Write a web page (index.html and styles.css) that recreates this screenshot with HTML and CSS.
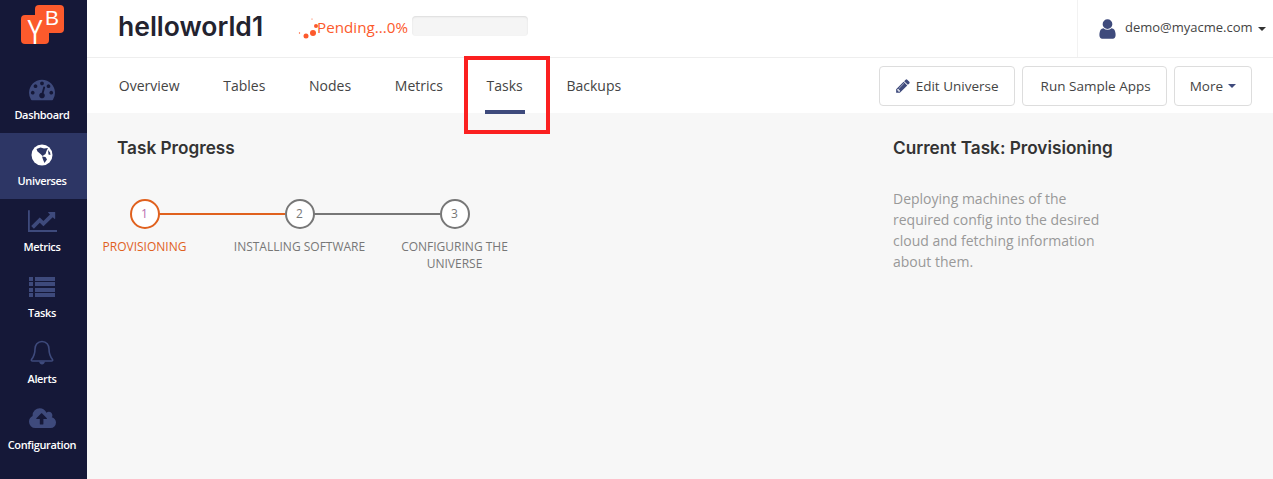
FILE: index.html
```html
<!DOCTYPE html>
<html lang="en">
<head>
    <meta charset="UTF-8">
    <meta name="viewport" content="width=device-width, initial-scale=1.0">
    <title>helloworld1 - Tasks</title>
    <link rel="stylesheet" href="styles.css">
</head>
<body>
    <div class="app">
        <aside class="sidebar">
            <a class="logo" href="#">
                <svg width="45" height="45" viewBox="0 0 45 45">
                    <rect x="16" y="5" width="29" height="28" rx="4" fill="#fc5a2c"/>
                    <rect x="2" y="15" width="28" height="29" rx="4" fill="#fc5a2c"/>
                    <text class="logo-letter" transform="translate(8 44) scale(1 1.45)">Y</text>
                    <text class="logo-letter logo-b" x="26" y="25">B</text>
                </svg>
            </a>
            <a class="side-item" href="#">
                <svg class="side-icon" width="26" height="26" viewBox="0 0 1792 1792"><path d="M384 1152q0-53-37.5-90.5t-90.5-37.5-90.5 37.5-37.5 90.5 37.5 90.5 90.5 37.5 90.5-37.5 37.5-90.5zm192-448q0-53-37.5-90.5t-90.5-37.5-90.5 37.5-37.5 90.5 37.5 90.5 90.5 37.5 90.5-37.5 37.5-90.5zm428 481l101-382q6-26-7.5-48.5t-38.5-29.5-48 6.5-30 39.5l-101 382q-60 5-107 43.5t-63 98.5q-20 77 20 146t117 89 146-20 89-117q16-60-6-117t-72-91zm660-33q0-53-37.5-90.5t-90.5-37.5-90.5 37.5-37.5 90.5 37.5 90.5 90.5 37.5 90.5-37.5 37.5-90.5zm-640-640q0-53-37.5-90.5t-90.5-37.5-90.5 37.5-37.5 90.5 37.5 90.5 90.5 37.5 90.5-37.5 37.5-90.5zm448 192q0-53-37.5-90.5t-90.5-37.5-90.5 37.5-37.5 90.5 37.5 90.5 90.5 37.5 90.5-37.5 37.5-90.5zm320 448q0 261-141 483-19 29-54 29h-1402q-35 0-54-29-141-221-141-483 0-182 71-348t191-286 286-191 348-71 348 71 286 191 191 286 71 348z"/></svg>
                <span>Dashboard</span>
            </a>
            <a class="side-item active" href="#">
                <svg class="side-icon" width="22" height="22" viewBox="0 0 22 22">
                    <circle cx="11" cy="11" r="10.5" fill="#fff"/>
                    <path d="M5.500 5l4-1.500 3.500 1 4-.5-1.500 3-1 3-3 2-2-2-3-2.500z" fill="#2d3665"/>
                    <path d="M11 12.500l3.500.5 1.500 2.500-2.500 3.500-1.500-3.500z" fill="#2d3665"/>
                    <path d="M17 6l2 2.500.5 2.500-2-.5z" fill="#2d3665"/>
                </svg>
                <span>Universes</span>
            </a>
            <a class="side-item" href="#">
                <svg class="side-icon" width="29" height="26" viewBox="0 0 2048 1792"><path d="M2048 1536v128h-2048v-1536h128v1408h1920zm-128-1248v435q0 21-19.5 29.5t-35.5-7.5l-121-121-633 633q-10 10-23 10t-23-10l-233-233-416 416-192-192 585-585q10-10 23-10t23 10l233 233 464-464-121-121q-16-16-7.5-35.5t29.5-19.5h435q14 0 23 9t9 23z"/></svg>
                <span>Metrics</span>
            </a>
            <a class="side-item" href="#">
                <svg class="side-icon" width="26" height="22" viewBox="0 0 26 22">
                    <rect y="1" width="4" height="4"/><rect x="6" y="1" width="20" height="4"/>
                    <rect y="6" width="4" height="4"/><rect x="6" y="6" width="20" height="4"/>
                    <rect y="12" width="4" height="4"/><rect x="6" y="12" width="20" height="4"/>
                    <rect y="17" width="4" height="4"/><rect x="6" y="17" width="20" height="4"/>
                </svg>
                <span>Tasks</span>
            </a>
            <a class="side-item" href="#">
                <svg class="side-icon" width="24" height="26" viewBox="0 0 24 26">
                    <path d="M12 1.500c-4.500 0-7 3.500-7 7.500 0 5-1.500 8-3.500 10.500-.5 1 0 1.500 1 1.500h19c1 0 1.500-.5 1-1.500-2-2.500-3.500-5.500-3.500-10.500 0-4-2.500-7.500-7-7.500z" fill="none" stroke="#3e4a7c" stroke-width="1.600"/>
                    <path d="M9 21.500c.5 2 1.500 3 3 3s2.500-1 3-3z"/>
                </svg>
                <span>Alerts</span>
            </a>
            <a class="side-item" href="#">
                <svg class="side-icon" width="27" height="25" viewBox="0 0 1920 1792"><path d="M1280 864q0-14-9-23l-352-352q-9-9-23-9t-23 9l-351 351q-10 12-10 24 0 14 9 23t23 9h224v352q0 13 9.500 22.500t22.500 9.500h192q13 0 22.500-9.500t9.500-22.500v-352h224q13 0 22.500-9.500t9.500-22.500zm640 288q0 159-112.500 271.500t-271.500 112.500h-1088q-185 0-316.500-131.500t-131.500-316.500q0-130 70-240t188-165q-2-30-2-43 0-212 150-362t362-150q156 0 285.500 87t188.500 231q71-62 166-62 106 0 181 75t75 181q0 76-41 138 130 31 213.500 135.500t83.500 238.500z"/></svg>
                <span>Configuration</span>
            </a>
        </aside>

        <div class="page">
            <header class="topbar">
                <h1 class="universe-name">helloworld1</h1>
                <div class="status">
                    <svg class="spinner" width="20" height="20" viewBox="0 0 20 20">
                        <circle cx="17" cy="8" r="2"/><circle cx="14" cy="15" r="3"/><circle cx="7" cy="18" r="2.500"/><circle cx="0.500" cy="15" r=".7"/><circle cx="13" cy="1" r=".6"/>
                    </svg>
                    <span class="status-text">Pending...0%</span>
                    <div class="progress"></div>
                </div>
                <div class="user-menu">
                    <svg width="17" height="20" viewBox="224 128 1344 1536"><path d="M1536 1399q0 109-62.500 187t-150.500 78h-854q-88 0-150.500-78t-62.500-187q0-85 8.500-160.500t31.500-152 58.500-131 94-89 134.500-34.500q131 128 313 128t313-128q76 0 134.500 34.500t94 89 58.500 131 31.500 152 8.500 160.500zm-256-887q0 159-112.500 271.500t-271.500 112.500-271.500-112.500-112.500-271.500 112.500-271.500 271.500-112.500 271.500 112.500 112.500 271.500z" fill="#3e4a7c"/></svg>
                    <span class="user-email">demo@myacme.com</span>
                    <span class="caret"></span>
                </div>
            </header>

            <nav class="tabs">
                <ul class="tab-list">
                    <li class="tab">Overview</li>
                    <li class="tab">Tables</li>
                    <li class="tab">Nodes</li>
                    <li class="tab">Metrics</li>
                    <li class="tab active">Tasks</li>
                    <li class="tab">Backups</li>
                </ul>
                <div class="actions">
                    <button class="btn">
                        <svg width="16" height="16" viewBox="0 0 1792 1792"><path d="M491 1536l91-91-235-235-91 91v107h128v128h107zm523-928q0-22-22-22-10 0-17 7l-542 542q-7 7-7 17 0 22 22 22 10 0 17-7l542-542q7-7 7-17zm-54-192l416 416-832 832h-416v-416zm683 96q0 53-37 90l-166 166-416-416 166-165q36-38 90-38 53 0 91 38l235 234q37 39 37 91z" fill="#3e4a7c"/></svg>
                        Edit Universe
                    </button>
                    <button class="btn btn-run">Run Sample Apps</button>
                    <button class="btn">More <span class="caret caret-blue"></span></button>
                </div>
            </nav>

            <main class="content">
                <section class="progress-panel">
                    <h2 class="section-title">Task Progress</h2>
                    <ol class="steps">
                        <li class="step current"><span class="step-num">1</span><span class="step-label">Provisioning</span></li>
                        <li class="step"><span class="step-num">2</span><span class="step-label">Installing Software</span></li>
                        <li class="step"><span class="step-num">3</span><span class="step-label">Configuring the Universe</span></li>
                    </ol>
                </section>
                <section class="current-task">
                    <h2 class="section-title">Current Task: Provisioning</h2>
                    <p class="task-desc">Deploying machines of the required config into the desired cloud and fetching information about them.</p>
                </section>
            </main>
            <div class="highlight"></div>
        </div>
    </div>
</body>
</html>
```
FILE: styles.css
```css
* {
    box-sizing: border-box;
}
html, body {
    height: 100%;
}
body {
    margin: 0;
    font-family: "Open Sans", sans-serif;
    font-size: 14px;
    color: #444;
    background: #f7f7f7;
    overflow: hidden;
}
a {
    text-decoration: none;
}
.app {
    display: flex;
    height: 479px;
}

/* sidebar */
.sidebar {
    width: 87px;
    flex: none;
    background: #151838;
}
.logo {
    display: block;
    height: 67px;
    padding-left: 19px;
}
.logo svg {
    display: block;
    overflow: visible;
}
.logo-letter {
    font-family: "Liberation Sans", sans-serif;
    font-size: 24px;
    fill: #fff;
}
.logo-b {
    font-size: 21px;
}
.side-item {
    display: flex;
    flex-direction: column;
    align-items: center;
    height: 66px;
    padding: 9px 3px 0 0;
    color: #fff;
    font-size: 11px;
    font-weight: 600;
    letter-spacing: -0.35px;
}
.side-item.active {
    background: #2d3665;
}
.side-icon {
    height: 26px;
    margin-bottom: 5px;
    fill: #3e4a7c;
}

/* top bar */
.page {
    flex: 1;
    position: relative;
    display: flex;
    flex-direction: column;
    min-width: 0;
}
.topbar {
    display: flex;
    align-items: center;
    height: 58px;
    padding-left: 31px;
    background: #fff;
    border-bottom: 1px solid #eee;
}
.universe-name {
    margin: 0 36px 5px 0;
    font-family: Inter, sans-serif;
    font-size: 26.500px;
    font-weight: 600;
    color: #23232f;
}
.status {
    display: flex;
    align-items: center;
    margin-bottom: 5px;
    color: #fc5a2c;
}
.spinner {
    fill: #fc5a2c;
    margin: 4px -2px 0 0;
    overflow: visible;
}
.status-text {
    margin: 1px 4px 0 0;
    font-size: 15.200px;
}
.progress {
    width: 116px;
    height: 20px;
    background: #f5f5f5;
    border-radius: 4px;
    box-shadow: inset 0 1px 2px rgba(0, 0, 0, 0.1);
}
.user-menu {
    display: flex;
    align-items: center;
    align-self: stretch;
    margin-left: auto;
    width: 196px;
    padding-left: 21px;
    border-left: 1px solid #f2f2f2;
}
.user-email {
    margin: 0 5px 3px 9px;
    font-size: 13px;
}
.caret {
    display: inline-block;
    width: 0;
    height: 0;
    border-top: 4px solid #333;
    border-left: 4px solid transparent;
    border-right: 4px solid transparent;
    vertical-align: middle;
}
.caret-blue {
    border-top-color: #3e4a7c;
}

/* tabs */
.tabs {
    display: flex;
    justify-content: space-between;
    align-items: center;
    height: 55px;
    padding-right: 21px;
    background: #fff;
}
.tab-list {
    display: flex;
    align-self: stretch;
    margin: 0;
    padding: 0 0 0 10px;
    list-style: none;
}
.tab {
    position: relative;
    padding: 18px 21.850px 0;
}
.tab.active::after {
    content: "";
    position: absolute;
    left: 19.850px;
    right: 19.850px;
    bottom: -1px;
    height: 4px;
    background: #3e4a7c;
}
.actions {
    display: flex;
    gap: 7px;
}
.btn {
    display: flex;
    align-items: center;
    gap: 5px;
    height: 40px;
    padding: 0 15px;
    font-family: inherit;
    font-size: 13.500px;
    color: #444;
    background: #fff;
    border: 1px solid #ddd;
    border-radius: 4px;
}
.btn-run {
    padding-left: 18px;
}

/* main */
.content {
    flex: 1;
    display: flex;
    padding: 24px 0 0 30px;
}
.progress-panel {
    width: 776px;
}
.section-title {
    margin: 0;
    font-family: Inter, sans-serif;
    font-size: 17.200px;
    font-weight: 600;
    color: #333;
}
.steps {
    display: flex;
    margin: 41px 0 0 -50px;
    padding: 0;
    list-style: none;
}
.step {
    position: relative;
    display: flex;
    flex-direction: column;
    align-items: center;
    width: 155px;
    color: #777;
}
.step:not(:last-child)::after {
    content: "";
    position: absolute;
    top: 14px;
    left: 92px;
    width: 126px;
    height: 2px;
    background: #777;
}
.step.current {
    color: #e0611e;
}
.step-num {
    width: 30px;
    height: 30px;
    flex: none;
    border: 2px solid currentColor;
    border-radius: 50%;
    background: #fff;
    text-align: center;
    font-size: 12px;
    line-height: 26px;
}
.step.current .step-num {
    color: #b76fb0;
    border-color: #e0611e;
}
.step.current::after {
    background: #e0611e;
}
.step-label {
    margin-top: 9px;
    font-size: 12px;
    line-height: 17px;
    text-align: center;
    text-transform: uppercase;
}
.current-task {
    width: 230px;
}
.task-desc {
    margin: 30px 0 0;
    line-height: 21px;
    color: #999;
}

/* red box marked over the Tasks tab */
.highlight {
    position: absolute;
    left: 377px;
    top: 56px;
    width: 86px;
    height: 78px;
    border: 4px solid #fb2020;
}
```
